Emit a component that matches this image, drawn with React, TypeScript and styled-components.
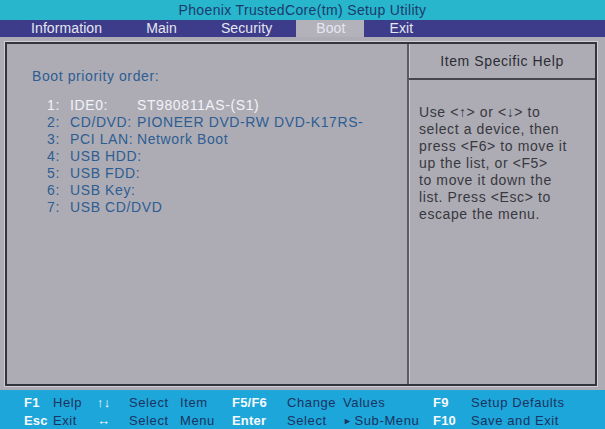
import React from "react";
import styled, { createGlobalStyle } from "styled-components";

const Global = createGlobalStyle`
  html, body { margin: 0; padding: 0; width: 605px; height: 429px; overflow: hidden; background: #adacb4; }
  body { font-family: "Liberation Sans", Arial, sans-serif; }
  * { box-sizing: border-box; }
`;

const Screen = styled.div`
  width: 605px;
  height: 429px;
  display: flex;
  flex-direction: column;
  background: #adacb4;
`;

const TitleBar = styled.div`
  height: 20px;
  background: #27b6cc;
  color: #1d3a6c;
  font-size: 14px;
  line-height: 21px;
  letter-spacing: 0.35px;
  text-align: center;
`;

const MenuBar = styled.div`
  height: 17px;
  background: #3c3c8a;
  display: flex;
  gap: 5px;
  padding-left: 11px;
`;

const MenuItem = styled.div<{ $active?: boolean }>`
  padding: 0 19px 0 20px;
  font-size: 14px;
  line-height: 17px;
  letter-spacing: 0.1px;
  color: #e6e6f2;
  background: ${(p) => (p.$active ? "#b3b2ba" : "transparent")};
`;

const Body = styled.div`
  flex: 1;
  padding: 5px 8px 4px 5px;
  display: flex;
`;

const Frame = styled.div`
  flex: 1;
  display: flex;
  border: 2px solid #34343c;
  box-shadow: 0 0 0 1px #cfced6;
`;

const MainPanel = styled.div`
  width: 402px;
  padding: 24px 0 0 25px;
  border-right: 2px solid #5a5a62;
  box-shadow: 1px 0 0 #c9c8d0;
`;

const Heading = styled.div`
  font-size: 14px;
  line-height: 17px;
  letter-spacing: 0.6px;
  color: #2d5d93;
`;

const BootList = styled.div`
  margin: 12px 0 0 15px;
  display: grid;
  grid-template-columns: 23px 67px auto;
  font-size: 14px;
  line-height: 17px;
  letter-spacing: 0.6px;
`;

const Cell = styled.div<{ $sel?: boolean }>`
  color: ${(p) => (p.$sel ? "#f2f2fa" : "#2d5d93")};
  white-space: nowrap;
`;

const HelpPanel = styled.div`
  flex: 1;
  display: flex;
  flex-direction: column;
`;

const HelpHeader = styled.div`
  height: 36px;
  border-bottom: 2px solid #45454c;
  display: flex;
  align-items: center;
  justify-content: center;
  font-size: 14px;
  letter-spacing: 0.6px;
  color: #2c2c34;
`;

const HelpBody = styled.div`
  padding: 24px 0 0 10px;
  font-size: 14px;
  line-height: 17px;
  letter-spacing: 0.6px;
  color: #38383f;
  white-space: nowrap;
`;

const Footer = styled.div`
  height: 39px;
  background: #1da6d9;
  padding: 4px 0 0 24px;
  display: grid;
  grid-template-columns: 29px 44px 32px 51px 52px 55px 56px 90px 38px auto;
  grid-auto-rows: 18px;
  font-size: 13px;
  line-height: 18px;
`;

const Key = styled.div`
  color: #f6f9ff;
  font-weight: bold;
  letter-spacing: 0.2px;
  white-space: nowrap;
`;

const Label = styled.div`
  color: #1b3462;
  letter-spacing: 0.6px;
  white-space: nowrap;
`;

const Pointer = styled.span`
  font-size: 9px;
  margin-right: 2px;
  vertical-align: 1px;
`;

const menu = ["Information", "Main", "Security", "Boot", "Exit"];

const bootItems: [string, string, string][] = [
  ["1:", "IDE0:", "ST980811AS-(S1)"],
  ["2:", "CD/DVD:", "PIONEER DVD-RW DVD-K17RS-"],
  ["3:", "PCI LAN:", "Network Boot"],
  ["4:", "USB HDD:", ""],
  ["5:", "USB FDD:", ""],
  ["6:", "USB Key:", ""],
  ["7:", "USB CD/DVD", ""],
];

const helpLines = [
  "Use <\u2191> or <\u2193> to",
  "select a device, then",
  "press <F6> to move it",
  "up the list, or <F5>",
  "to move it down the",
  "list. Press <Esc> to",
  "escape the menu.",
];

export default function App() {
  return (
    <Screen>
      <Global />
      <TitleBar>Phoenix TrustedCore(tm) Setup Utility</TitleBar>
      <MenuBar>
        {menu.map((m) => (
          <MenuItem key={m} $active={m === "Boot"}>
            {m}
          </MenuItem>
        ))}
      </MenuBar>
      <Body>
        <Frame>
          <MainPanel>
            <Heading>Boot priority order:</Heading>
            <BootList>
              {bootItems.map(([n, l, v], i) => (
                <React.Fragment key={n}>
                  <Cell $sel={i === 0}>{n}</Cell>
                  <Cell $sel={i === 0}>{l}</Cell>
                  <Cell $sel={i === 0}>{v}</Cell>
                </React.Fragment>
              ))}
            </BootList>
          </MainPanel>
          <HelpPanel>
            <HelpHeader>Item Specific Help</HelpHeader>
            <HelpBody>
              {helpLines.map((l) => (
                <div key={l}>{l}</div>
              ))}
            </HelpBody>
          </HelpPanel>
        </Frame>
      </Body>
      <Footer>
        <Key>F1</Key>
        <Label>Help</Label>
        <Key>{"\u2191\u2193"}</Key>
        <Label>Select</Label>
        <Label>Item</Label>
        <Key>F5/F6</Key>
        <Label>Change</Label>
        <Label>Values</Label>
        <Key>F9</Key>
        <Label>Setup Defaults</Label>
        <Key>Esc</Key>
        <Label>Exit</Label>
        <Key>{"\u2194"}</Key>
        <Label>Select</Label>
        <Label>Menu</Label>
        <Key>Enter</Key>
        <Label>Select</Label>
        <Label>
          <Pointer>{"\u25BA"}</Pointer>Sub-Menu
        </Label>
        <Key>F10</Key>
        <Label>Save and Exit</Label>
      </Footer>
    </Screen>
  );
}
